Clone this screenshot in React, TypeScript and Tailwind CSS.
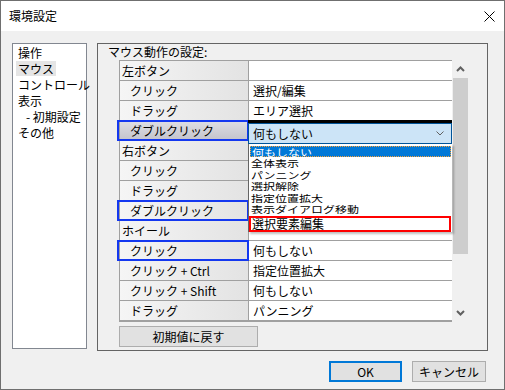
import React from 'react';

const FONT = "font-['Noto_Sans_CJK_JP','Noto_Sans',sans-serif]";

type Row = { label: string; indent?: boolean; value?: string; selected?: boolean; mark?: boolean };

const rows: Row[] = [
  { label: '左ボタン' },
  { label: 'クリック', indent: true, value: '選択/編集' },
  { label: 'ドラッグ', indent: true, value: 'エリア選択' },
  { label: 'ダブルクリック', indent: true, selected: true, mark: true },
  { label: '右ボタン' },
  { label: 'クリック', indent: true },
  { label: 'ドラッグ', indent: true },
  { label: 'ダブルクリック', indent: true, mark: true },
  { label: 'ホイール' },
  { label: 'クリック', indent: true, value: '何もしない', mark: true },
  { label: 'クリック + Ctrl', indent: true, value: '指定位置拡大' },
  { label: 'クリック + Shift', indent: true, value: '何もしない' },
  { label: 'ドラッグ', indent: true, value: 'パンニング' },
];

const options = ['全体表示', 'パンニング', '選択解除', '指定位置拡大', '表示ダイアログ移動'];

const navItems = [
  { label: '操作' },
  { label: 'マウス', active: true },
  { label: 'コントロール' },
  { label: '表示' },
  { label: '- 初期設定', sub: true },
  { label: 'その他' },
];

// one row of the settings grid
const GridRow = ({ row }: { row: Row }) => (
  <div className="flex h-[20px] border-b border-[#a0a0a0]">
    <div
      className={`relative w-[129px] border-r border-[#a0a0a0] flex items-center leading-[19px] whitespace-pre ${
        row.indent ? 'pl-[10px]' : 'pl-[2px]'
      } ${
        row.selected
          ? 'bg-gradient-to-b from-[#dedee4] to-[#c4c4cc]'
          : 'bg-gradient-to-r from-[#f5f5f5] to-[#e3e3e3]'
      }`}
    >
      {row.label}
      {row.mark && (
        <div className="absolute -left-[3px] -top-[1px] -right-[1px] -bottom-[1px] border-2 border-[#1438f0]" />
      )}
    </div>
    <div className="w-[203px] bg-white flex items-center pl-[4px] leading-[19px]">{row.value}</div>
  </div>
);

export default function App() {
  return (
    <div className={`w-[505px] h-[390px] border border-[#6f6f6f] bg-[#f0f0f0] flex flex-col text-[12px] text-black ${FONT}`}>
      {/* Title bar */}
      <div className="h-[30px] bg-white flex items-center justify-between pl-[8px] pr-[9px]">
        <span className="text-[12px] leading-none">環境設定</span>
        <svg width="11" height="11" viewBox="0 0 11 11">
          <path d="M0.5 0.5 L10.5 10.5 M10.5 0.5 L0.5 10.5" stroke="#000" strokeWidth="1" />
        </svg>
      </div>

      {/* Body */}
      <div className="flex pt-[12px] pl-[11px] gap-[10px]">
        {/* Category list */}
        <div className="w-[75px] h-[306px] border border-[#828790] bg-white whitespace-nowrap">
          {navItems.map((item) => (
            <div key={item.label} className={`h-[16px] flex items-center ${item.sub ? 'pl-[11px]' : 'pl-[3px]'}`}>
              <span className={`px-[2px] leading-[15px] ${item.active ? 'bg-[#e5e5e5]' : ''}`}>{item.label}</span>
            </div>
          ))}
        </div>

        {/* Group box */}
        <div className="w-[391px] h-[308px] border border-[#646464] flex flex-col">
          <div className="h-[16px] pl-[10px] leading-[16px]">マウス動作の設定:</div>

          <div className="ml-[21px] flex">
            <div className="relative">
              <div className="border-l border-t border-[#a0a0a0] border-b border-b-[#a0a0a0]">
                {rows.map((row, i) => (
                  <GridRow key={i} row={row} />
                ))}
              </div>

              {/* Open combo box */}
              <div className="absolute left-[129px] top-[60px] w-[204px]">
                <div className="h-[3px] bg-black" />
                <div className="h-[21px] border border-[#005499] bg-[#cce4f7] flex items-center justify-between pl-[4px] pr-[7px]">
                  <span className="leading-[19px]">何もしない</span>
                  <svg width="8" height="5" viewBox="0 0 8 5">
                    <path d="M0.5 0.5 L4 4 L7.5 0.5" stroke="#606060" fill="none" strokeWidth="1" />
                  </svg>
                </div>
                <div className="bg-white border-l border-[#646464] pt-[2px] pr-[1px] shadow-[2px_2px_2px_rgba(0,0,0,0.25)]">
                  <div className="h-[11px] ml-[1px] bg-[#0078d7] text-white leading-[11px] pl-[2px] outline-1 outline-dotted outline-[#f7a23b] -outline-offset-1">
                    <span className="inline-block scale-y-[0.8] origin-center">何もしない</span>
                  </div>
                  {options.map((o) => (
                    <div key={o} className="h-[11.5px] leading-[11.5px] pl-[2px]">
                      <span className="inline-block scale-y-[0.8] origin-center">{o}</span>
                    </div>
                  ))}
                  <div className="h-[16px] mt-[1px] border-2 border-[#ff0000] leading-[12px] pl-[1px]">選択要素編集</div>
                </div>
              </div>
            </div>

            {/* Scrollbar */}
            <div className="w-[17px] h-[262px] flex flex-col items-center">
              <div className="h-[18px] flex items-center justify-center">
                <svg width="9" height="6" viewBox="0 0 9 6">
                  <path d="M1 5 L4.5 1.5 L8 5" stroke="#606060" fill="none" strokeWidth="2" />
                </svg>
              </div>
              <div className="w-[15px] h-[176px] bg-[#cdcdcd]" />
              <div className="flex-1" />
              <div className="h-[18px] flex items-center justify-center">
                <svg width="9" height="6" viewBox="0 0 9 6">
                  <path d="M1 1 L4.5 4.5 L8 1" stroke="#606060" fill="none" strokeWidth="2" />
                </svg>
              </div>
            </div>
          </div>

          <button className="ml-[21px] mt-[4px] w-[139px] h-[21px] border border-[#adadad] bg-[#e1e1e1] leading-[19px]">
            初期値に戻す
          </button>
        </div>
      </div>

      {/* Dialog buttons */}
      <div className="flex justify-end gap-[10px] pr-[18px] mt-[10px]">
        <button className="w-[73px] h-[21px] border-2 border-[#0078d7] bg-[#e1e1e1] leading-[17px]">OK</button>
        <button className="w-[74px] h-[21px] border border-[#adadad] bg-[#e1e1e1] leading-[19px]">キャンセル</button>
      </div>
    </div>
  );
}
